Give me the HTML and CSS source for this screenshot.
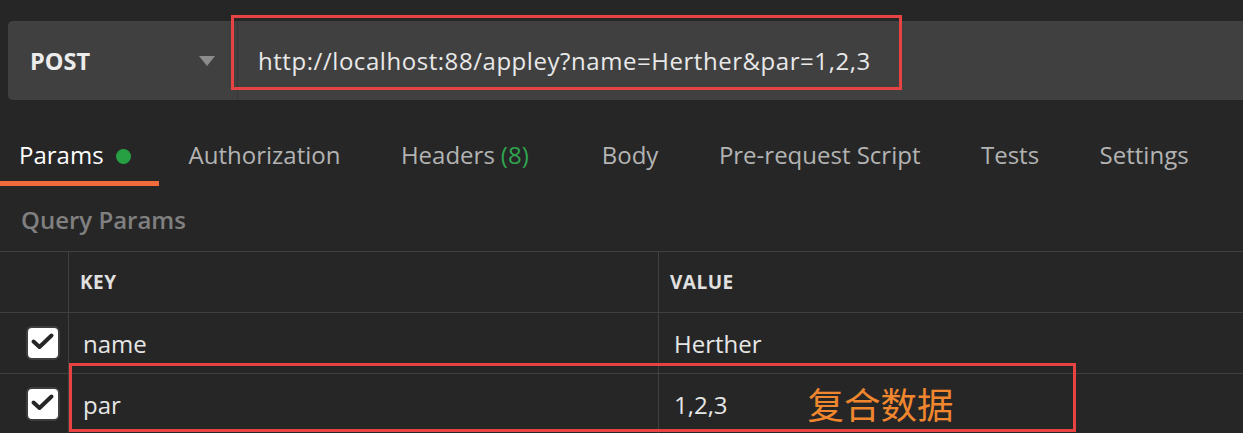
FILE: index.html
```html
<!DOCTYPE html>
<html>
<head>
<meta charset="utf-8">
<link rel="stylesheet" href="styles.css">
</head>
<body>
<div class="page">
  <div class="topbar">
    <div class="method">
      <span class="method-name">POST</span>
      <span class="caret"></span>
    </div>
    <div class="url">http://localhost:88/appley?name=Herther&amp;par=1,2,3</div>
  </div>
  <div class="tabs">
    <div class="tab active first">Params<span class="dot"></span></div>
    <div class="tab">Authorization</div>
    <div class="tab headers">Headers <span class="count">(8)</span></div>
    <div class="tab">Body</div>
    <div class="tab">Pre-request Script</div>
    <div class="tab">Tests</div>
    <div class="tab">Settings</div>
  </div>
  <div class="section-title">Query Params</div>
  <div class="table">
    <div class="row head">
      <div class="cell check"></div>
      <div class="cell key">KEY</div>
      <div class="cell value">VALUE</div>
    </div>
    <div class="row">
      <div class="cell check"><span class="box"><svg viewBox="0 0 30 30" width="30" height="30"><path d="M5.5 13.5L11.5 19L23.5 7.5" fill="none" stroke="#262626" stroke-width="4" stroke-linecap="round" stroke-linejoin="round"/></svg></span></div>
      <div class="cell key">name</div>
      <div class="cell value">Herther</div>
    </div>
    <div class="row">
      <div class="cell check"><span class="box"><svg viewBox="0 0 30 30" width="30" height="30"><path d="M5.5 13.5L11.5 19L23.5 7.5" fill="none" stroke="#262626" stroke-width="4" stroke-linecap="round" stroke-linejoin="round"/></svg></span></div>
      <div class="cell key">par</div>
      <div class="cell value">1,2,3<span class="note">复合数据</span></div>
    </div>
  </div>
  <div class="mark mark-url"></div>
  <div class="mark mark-row"></div>
</div>
</body>
</html>
```
FILE: styles.css
```css
html, body {
  margin: 0;
  padding: 0;
  background: #262626;
}
.page {
  position: relative;
  width: 1243px;
  height: 433px;
  overflow: hidden;
  font-family: "Open Sans", "Noto Sans", sans-serif;
  color: #e6e6e6;
}
.topbar {
  display: flex;
  padding: 21px 0 0 8px;
  height: 79px;
}
.method {
  width: 230px;
  height: 79px;
  box-sizing: border-box;
  background: #404040;
  border-radius: 5px 0 0 5px;
  border-right: 1px solid #383838;
  display: flex;
  align-items: center;
  justify-content: space-between;
  padding: 0 22px 0 22px;
}
.method-name {
  font-size: 23.5px;
  font-weight: 700;
  color: #ececec;
}
.caret {
  width: 0;
  height: 0;
  border-left: 8px solid transparent;
  border-right: 8px solid transparent;
  border-top: 10px solid #8c8c8c;
}
.url {
  flex: 1;
  height: 79px;
  background: #404040;
  display: flex;
  align-items: center;
  padding-left: 20px;
  font-size: 24px;
  letter-spacing: 0.55px;
  color: #e8e8e8;
}
.tabs {
  display: flex;
  height: 86px;
}
.tab {
  box-sizing: border-box;
  height: 86px;
  padding: 38px 30.5px 0 30px;
  line-height: 34px;
  font-size: 24px;
  color: #b3b3b3;
  border-bottom: 5px solid transparent;
  display: flex;
  align-items: flex-start;
}
.tab.first {
  padding-left: 19px;
  padding-right: 28px;
}
.tab.active {
  color: #ffffff;
  border-bottom-color: #f26b3a;
}
.dot {
  width: 15px;
  height: 15px;
  border-radius: 50%;
  background: #27a043;
  margin: 11px 0 0 12px;
}
.tab.headers {
  padding-right: 43px;
}
.count {
  color: #2ea44f;
  margin-left: 6px;
}
.section-title {
  height: 65px;
  line-height: 68px;
  padding-left: 21px;
  font-size: 24px;
  font-weight: 600;
  color: #808080;
}
.table {
  border-top: 1px solid #404040;
}
.row {
  display: flex;
  height: 60px;
  border-bottom: 1px solid #404040;
}
.cell {
  display: flex;
  align-items: center;
  box-sizing: border-box;
}
.cell.check {
  width: 69px;
  border-right: 1px solid #404040;
  padding-left: 26px;
}
.cell.key {
  width: 590px;
  border-right: 1px solid #404040;
  padding-left: 14px;
  font-size: 24px;
  color: #e6e6e6;
}
.cell.value {
  flex: 1;
  padding-left: 15px;
  font-size: 24px;
  color: #e6e6e6;
}
.row.head .cell.key,
.row.head .cell.value {
  font-size: 19px;
  font-weight: 700;
  letter-spacing: 0.5px;
  color: #e0e0e0;
  padding-left: 11px;
}
.box {
  width: 34px;
  height: 34px;
  box-sizing: border-box;
  background: #ffffff;
  border: 2px solid #3e3e3e;
  border-radius: 6px;
  display: block;
}
.box svg {
  display: block;
}
.note {
  margin-left: 80px;
  font-family: "Noto Sans CJK SC", sans-serif;
  font-size: 36.5px;
  color: #f0862e;
  line-height: 1;
}
.mark {
  position: absolute;
  border: 3px solid #e84343;
  box-sizing: border-box;
}
.mark-url {
  left: 231px;
  top: 15px;
  width: 671px;
  height: 75px;
}
.mark-row {
  left: 69px;
  top: 363px;
  width: 1007px;
  height: 69px;
}
```
